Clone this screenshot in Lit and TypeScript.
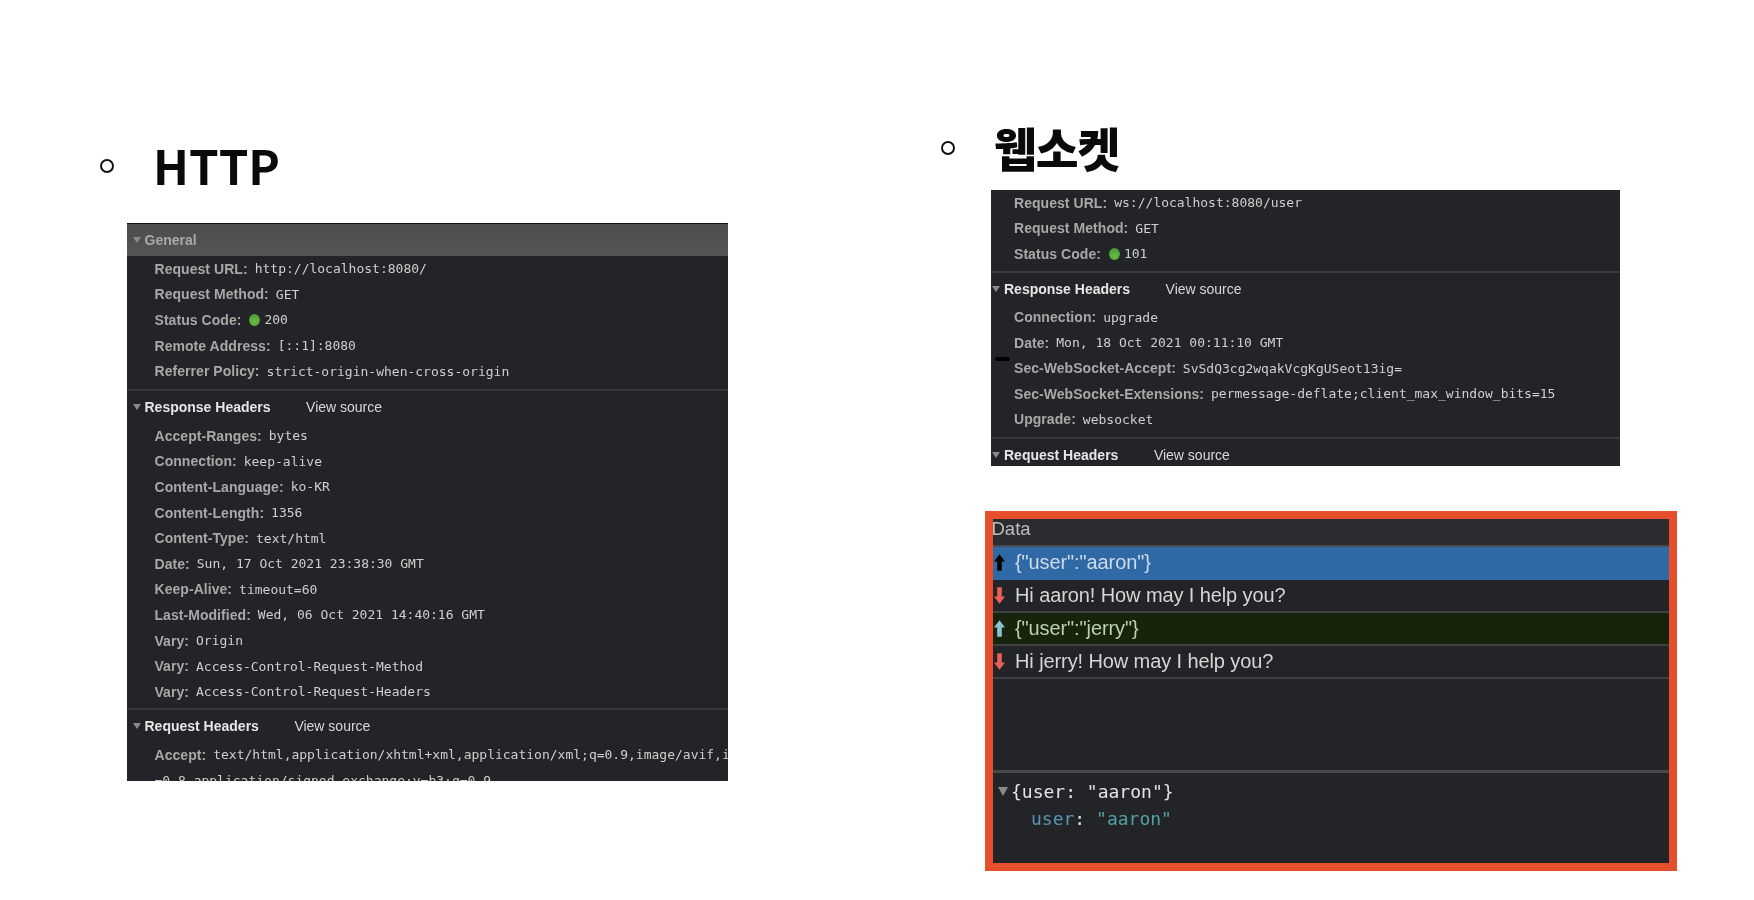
import { LitElement, html, css } from "lit";
import { customElement } from "lit/decorators.js";

type Row = [string, string, boolean?];

const generalL: Row[] = [
  ["Request URL:", "http://localhost:8080/"],
  ["Request Method:", "GET"],
  ["Status Code:", "200", true],
  ["Remote Address:", "[::1]:8080"],
  ["Referrer Policy:", "strict-origin-when-cross-origin"],
];
const respL: Row[] = [
  ["Accept-Ranges:", "bytes"],
  ["Connection:", "keep-alive"],
  ["Content-Language:", "ko-KR"],
  ["Content-Length:", "1356"],
  ["Content-Type:", "text/html"],
  ["Date:", "Sun, 17 Oct 2021 23:38:30 GMT"],
  ["Keep-Alive:", "timeout=60"],
  ["Last-Modified:", "Wed, 06 Oct 2021 14:40:16 GMT"],
  ["Vary:", "Origin"],
  ["Vary:", "Access-Control-Request-Method"],
  ["Vary:", "Access-Control-Request-Headers"],
];
const generalR: Row[] = [
  ["Request URL:", "ws://localhost:8080/user"],
  ["Request Method:", "GET"],
  ["Status Code:", "101", true],
];
const respR: Row[] = [
  ["Connection:", "upgrade"],
  ["Date:", "Mon, 18 Oct 2021 00:11:10 GMT"],
  ["Sec-WebSocket-Accept:", "SvSdQ3cg2wqakVcgKgUSeot13ig="],
  ["Sec-WebSocket-Extensions:", "permessage-deflate;client_max_window_bits=15"],
  ["Upgrade:", "websocket"],
];

const arrow = (up: boolean, color: string) => html`
  <svg class="arrow" viewBox="0 0 14 20" style="color:${color}">
    <path fill="currentColor" d=${up ? "M7 1 13 9H9.5V19H4.5V9H1Z" : "M7 19 13 11H9.5V1H4.5V11H1Z"}></path>
  </svg>`;

@customElement("app-root")
export class AppRoot extends LitElement {
  static styles = css`
    :host { display: block; width: 1754px; height: 900px; background: #fff; overflow: hidden; }
    .slide { display: flex; height: 900px; filter: blur(0.7px); font-family: "Liberation Sans", Arial, sans-serif; }
    .left { width: 940px; padding: 136px 0 0 100px; box-sizing: border-box; flex: none; }
    .right { padding: 117.5px 0 0 0; flex: none; width: 780px; margin-left: 1px; }
    .head { display: flex; align-items: center; height: 60px; }
    .bullet { width: 10px; height: 10px; border: 2.4px solid #111; border-radius: 50%; flex: none; }
    .title { margin: 0 0 2px 39px; font: 700 47.5px/60px "Noto Sans CJK KR", "Noto Sans", sans-serif; color: #0a0a0a; }
    .right .title { margin: 0 0 2px 39px; font-size: 46.5px; letter-spacing: -1px; font-weight: 900; }
    .panel { background: #232427; color: #c9c9c9; overflow: hidden; font-size: 14px; box-sizing: border-box; }
    .left .panel { margin: 27px 0 0 26.5px; width: 601px; height: 558px; }
    .right .panel { margin: 12.5px 0 0 50px; width: 629px; height: 276px; position: relative; }
    .gen { height: 33px; background: linear-gradient(#4c4c4c, #555); border-top: 1px solid #111; box-sizing: border-box; display: flex; align-items: center; padding-left: 6px; color: #a9a9a9; font-weight: 700; }
    .sec { border-top: 2px solid #38393b; height: 34px; box-sizing: border-box; display: flex; align-items: center; padding-left: 6px; color: #e6e6e6; font-weight: 700; }
    .right .sec { padding-left: 1px; height: 33px; }
    .tri { width: 0; height: 0; border: 4px solid transparent; border-top: 6px solid #8a8a8a; border-bottom: 0; margin-right: 4px; flex: none; }
    .view { font-weight: 400; color: #d8d8d8; margin-left: 35.5px; }
    .row { height: 25.6px; display: flex; align-items: center; padding-left: 28px; white-space: nowrap; }
    .right .row { padding-left: 23px; }
    .k { color: #a8a8a8; font-weight: 700; margin-right: 7px; letter-spacing: 0.05px; }
    .v { font: 13px "DejaVu Sans Mono", "Liberation Mono", monospace; color: #cfcfcf; font-weight: 400; }
    .dot { width: 11px; height: 12px; border-radius: 50%; background: radial-gradient(circle at 50% 65%, #6cc04a, #3f8f2c); margin: 0 4px 0 1px; flex: none; }
    .sp1 { height: 5px; }
    .sp2 { height: 3.5px; }
    .sp3 { height: 4.5px; }
    .sp4 { height: 5px; }
    .mark { position: absolute; left: 4px; top: 167px; width: 15px; height: 4px; border-radius: 2px; background: #000; }
    .data { margin: 45px 0 0 44px; width: 692px; height: 360px; box-sizing: border-box; border: 8px solid #e64f2b; background: #232427; display: flex; flex-direction: column; font-size: 20px; color: #d5d5d5; }
    .dh { height: 28px; padding-bottom: 6px; background: #2b2c2f; border-bottom: 2px solid #4a4b4d; display: flex; align-items: center; flex: none; color: #bdbdbd; box-sizing: border-box; font-size: 18.5px; }
    .dh span { margin-left: -1.5px; }
    .m { height: 33px; display: flex; align-items: center; border-bottom: 2px solid #3e3f41; box-sizing: border-box; flex: none; letter-spacing: -0.1px; }
    .m.sel { background: #2f69a6; color: #cfdbe7; border-bottom-color: #2f69a6; }
    .m.grn { background: #17240c; color: #bcd0b0; }
    .arrow { width: 13px; height: 19px; margin-right: 9px; flex: none; }
    .space { flex: 1; border-bottom: 3px solid #47484a; }
    .obj { height: 90px; flex: none; padding-top: 5px; box-sizing: border-box; font: 18px/27px "DejaVu Sans Mono", "Liberation Mono", monospace; color: #e4e4e4; }
    .obj div { display: flex; align-items: center; padding-left: 5px; }
    .obj .tri2 { width: 0; height: 0; border: 5px solid transparent; border-top: 9px solid #8a8a8a; border-bottom: 0; margin-right: 3px; }
    .obj .u { padding-left: 38px; white-space: pre; color: #e4e4e4; }
    .blue { color: #5b93b5; }
    .teal { color: #4fa3a5; }
  `;

  rows(rows: Row[]) {
    return rows.map(
      ([k, v, dot]) => html`<div class="row"><span class="k">${k}</span>${dot ? html`<span class="dot"></span>` : ""}<span class="v">${v}</span></div>`
    );
  }

  sec(name: string) {
    return html`<div class="sec"><span class="tri"></span>${name}<span class="view">View source</span></div>`;
  }

  render() {
    return html`
      <div class="slide">
        <div class="left">
          <div class="head"><span class="bullet"></span><span class="title">HTTP</span></div>
          <div class="panel">
            <div class="gen"><span class="tri"></span>General</div>
            ${this.rows(generalL)}
            <div class="sp1"></div>
            ${this.sec("Response Headers")}
            ${this.rows(respL)}
            <div class="sp2"></div>
            ${this.sec("Request Headers")}
            <div class="row"><span class="k">Accept:</span><span class="v">text/html,application/xhtml+xml,application/xml;q=0.9,image/avif,image/webp</span></div>
            <div class="row"><span class="v">=0.8,application/signed-exchange;v=b3;q=0.9</span></div>
          </div>
        </div>
        <div class="right">
          <div class="head"><span class="bullet"></span><span class="title">웹소켓</span></div>
          <div class="panel">
            <span class="mark"></span>
            ${this.rows(generalR)}
            <div class="sp3"></div>
            ${this.sec("Response Headers")}
            ${this.rows(respR)}
            <div class="sp4"></div>
            ${this.sec("Request Headers")}
          </div>
          <div class="data">
            <div class="dh"><span>Data</span></div>
            <div class="m sel">${arrow(true, "#050505")}{"user":"aaron"}</div>
            <div class="m">${arrow(false, "#e8605a")}Hi aaron! How may I help you?</div>
            <div class="m grn">${arrow(true, "#8fc0d0")}{"user":"jerry"}</div>
            <div class="m">${arrow(false, "#e8605a")}Hi jerry! How may I help you?</div>
            <div class="space"></div>
            <div class="obj">
              <div><span class="tri2"></span>{user: "aaron"}</div>
              <div class="u"><span class="blue">user</span>: <span class="teal">"aaron"</span></div>
            </div>
          </div>
        </div>
      </div>
    `;
  }
}
